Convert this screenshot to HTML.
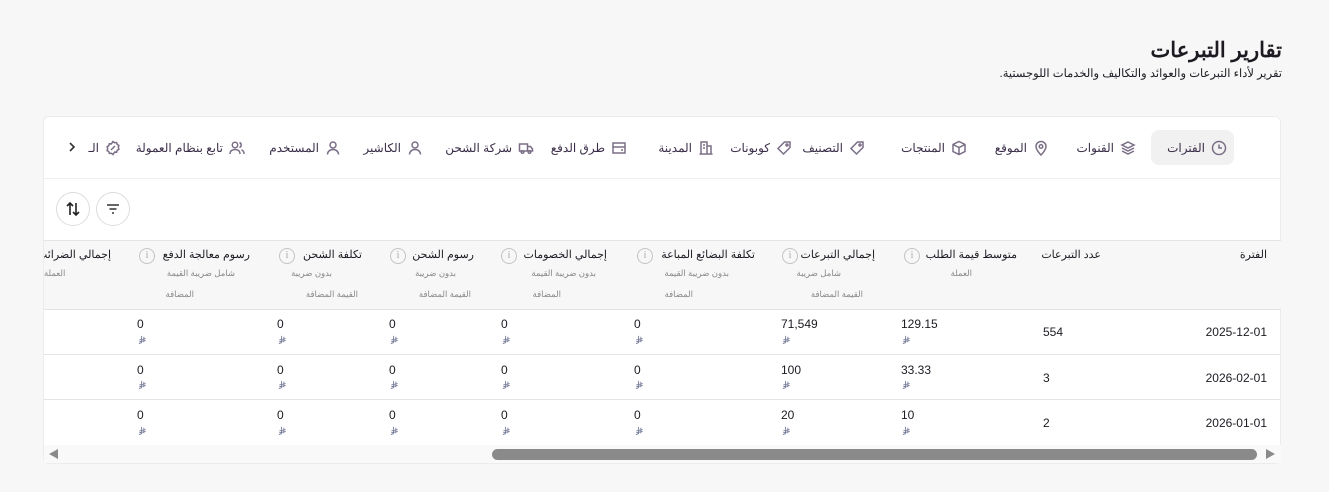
<!DOCTYPE html>
<html><head><meta charset="utf-8"><style>
*{margin:0;padding:0;box-sizing:border-box}
body{width:1329px;height:492px;background:#f7f7f7;font-family:"Liberation Sans","Noto Sans CJK SC",sans-serif;position:relative;overflow:hidden;color:#1d1a22}
.a{position:absolute;white-space:nowrap}
.card{position:absolute;left:43px;top:116px;width:1238px;height:348px;background:#fff;border:1px solid #ececec;border-radius:6px;overflow:hidden}
.tab{position:absolute;top:130px;height:35px;display:flex;align-items:center;gap:6px;font-size:12px;color:#3a2d48;direction:rtl}
.tab svg{width:16px;height:16px;stroke:#7a6e86;fill:none;stroke-width:1.5}
.hd{font-size:11px;color:#1d1a22;direction:rtl}
.sub{font-size:8.5px;color:#888;direction:rtl}
.info{position:absolute;width:16px;height:16px;border:1.3px solid #c4c4c4;border-radius:50%;color:#aaa;font-size:10px;text-align:center;line-height:13px;font-family:"Liberation Serif",serif;background:#f7f7f7}
.v{font-size:12px;color:#1d1a22}
.r{width:9px;height:9px}
.line{position:absolute;left:44px;width:1237px;height:1px;background:#e4e4e4}
</style></head><body>
<svg width="0" height="0" style="position:absolute"><defs><symbol id="rs" viewBox="0 0 10 10"><path d="M4 1v7.5L1 9.5 M6.5 2v6 M1.5 5.5l7-1.5 M1.5 7.5l7-1.5" stroke="#7a7f9a" stroke-width="1" fill="none"/></symbol></defs></svg>
<div class="a" style="right:47px;top:38px;font-size:21px;font-weight:bold;direction:rtl">تقارير التبرعات</div>
<div class="a" style="right:47px;top:66px;font-size:11.5px;direction:rtl">تقرير لأداء التبرعات والعوائد والتكاليف والخدمات اللوجستية.</div>
<div class="card"></div>
<div class="a" style="left:1151px;top:130px;width:83px;height:35px;background:#f1f1f2;border-radius:8px"></div>
<div class="tab" style="right:102px"><svg viewBox="0 0 16 16"><circle cx="8" cy="8" r="6.5"/><path d="M8 4.5V8h3"/></svg>الفترات</div>
<div class="tab" style="right:193px"><svg viewBox="0 0 16 16"><path d="M8 2 14 5 8 8 2 5Z M2 8l6 3 6-3 M2 11l6 3 6-3"/></svg>القنوات</div>
<div class="tab" style="right:280px"><svg viewBox="0 0 16 16"><path d="M8 15s5-5 5-8.5A5 5 0 0 0 3 6.5C3 10 8 15 8 15Z"/><circle cx="8" cy="6.5" r="1.8"/></svg>الموقع</div>
<div class="tab" style="right:362px"><svg viewBox="0 0 16 16"><path d="M8 1.5 14 4.5v7L8 14.5 2 11.5v-7Z M2 4.5 8 7.5 14 4.5 M8 7.5v7"/></svg>المنتجات</div>
<div class="tab" style="right:464px"><svg viewBox="0 0 16 16"><path d="M14 2H8.5L2 8.5 7.5 14 14 7.5Z"/><circle cx="11" cy="5" r="1"/></svg>التصنيف</div>
<div class="tab" style="right:537px"><svg viewBox="0 0 16 16"><path d="M14 2H8.5L2 8.5 7.5 14 14 7.5Z"/><circle cx="11" cy="5" r="1"/></svg>كوبونات</div>
<div class="tab" style="right:615px"><svg viewBox="0 0 16 16"><path d="M3 14V2h6v12 M9 6h4v8 M1.5 14h13 M5 5h2M5 8h2"/></svg>المدينة</div>
<div class="tab" style="right:702px"><svg viewBox="0 0 16 16"><rect x="2" y="3" width="12" height="10"/><path d="M2 7h12 M10 10h2"/></svg>طرق الدفع</div>
<div class="tab" style="right:795px"><svg viewBox="0 0 16 16"><path d="M1.5 4h8v7h-8Z M9.5 6.5h3l2 2.5v2h-5"/><circle cx="4.5" cy="12" r="1.3"/><circle cx="11.5" cy="12" r="1.3"/></svg>شركة الشحن</div>
<div class="tab" style="right:906px"><svg viewBox="0 0 16 16"><circle cx="8" cy="5" r="3"/><path d="M2.5 14.5c0-3 2.5-5 5.5-5s5.5 2 5.5 5"/></svg>الكاشير</div>
<div class="tab" style="right:988px"><svg viewBox="0 0 16 16"><circle cx="8" cy="5" r="3"/><path d="M2.5 14.5c0-3 2.5-5 5.5-5s5.5 2 5.5 5"/></svg>المستخدم</div>
<div class="tab" style="right:1084px"><svg viewBox="0 0 16 16"><circle cx="6" cy="5" r="2.7"/><path d="M1 14c0-3 2-4.5 5-4.5s5 1.5 5 4.5 M10.5 2.5a2.7 2.7 0 0 1 0 5 M12.5 9.8c1.5.6 2.5 2 2.5 4.2"/></svg>تابع بنظام العمولة</div>
<div class="tab" style="right:1208px"><svg viewBox="0 0 16 16"><path d="M8 1.5l1.6 1.2 2-.2.6 1.9 1.7 1.1-.6 1.9.6 1.9-1.7 1.1-.6 1.9-2-.2L8 14.5l-1.6-1.2-2 .2-.6-1.9-1.7-1.1.6-1.9-.6-1.9 1.7-1.1.6-1.9 2 .2Z M6 10l4-4"/></svg>الـ</div>
<svg class="a" style="left:67px;top:141px" width="10" height="12" viewBox="0 0 10 12"><path d="M3 2l4 4-4 4" stroke="#333" stroke-width="1.6" fill="none"/></svg>
<div class="a" style="left:44px;top:178px;width:1237px;height:1px;background:#eee"></div>
<div class="a" style="left:56px;top:192px;width:34px;height:34px;border:1px solid #ddd;border-radius:50%"><svg width="32" height="32" viewBox="0 0 32 32" style="position:absolute;left:0;top:0"><path d="M13 22V10M10 13l3-3 3 3M19 10v12M16 19l3 3 3-3" stroke="#222" stroke-width="1.6" fill="none"/></svg></div>
<div class="a" style="left:96px;top:192px;width:34px;height:34px;border:1px solid #ddd;border-radius:50%"><svg width="32" height="32" viewBox="0 0 32 32" style="position:absolute;left:0;top:0"><path d="M10 12h12M12.5 16h7M15 20h2" stroke="#333" stroke-width="1.6"/></svg></div>
<div class="a" style="left:44px;top:240px;width:1237px;height:70px;background:#f7f7f7;border-top:1px solid #e4e4e4;border-bottom:1px solid #e4e4e4"></div>
<div class="a hd" style="right:62px;top:248px">الفترة</div>
<div class="a hd" style="right:228px;top:248px">عدد التبرعات</div>
<div class="a hd" style="right:312px;top:248px">متوسط قيمة الطلب</div><div class="a sub" style="right:357px;top:268px">العملة</div><div class="info" style="left:904px;top:248px">i</div>
<div class="a hd" style="right:454px;top:248px">إجمالي التبرعات</div><div class="a sub" style="right:488px;top:268px">شامل ضريبة</div><div class="a sub" style="right:466px;top:289px">القيمة المضافة</div><div class="info" style="left:782px;top:248px">i</div>
<div class="a hd" style="right:574px;top:248px">تكلفة البضائع المباعة</div><div class="a sub" style="right:600px;top:268px">بدون ضريبة القيمة</div><div class="a sub" style="right:636px;top:289px">المضافة</div><div class="info" style="left:637px;top:248px">i</div>
<div class="a hd" style="right:722px;top:248px">إجمالي الخصومات</div><div class="a sub" style="right:733px;top:268px">بدون ضريبة القيمة</div><div class="a sub" style="right:768px;top:289px">المضافة</div><div class="info" style="left:501px;top:248px">i</div>
<div class="a hd" style="right:855px;top:248px">رسوم الشحن</div><div class="a sub" style="right:873px;top:268px">بدون ضريبة</div><div class="a sub" style="right:858px;top:289px">القيمة المضافة</div><div class="info" style="left:390px;top:248px">i</div>
<div class="a hd" style="right:967px;top:248px">تكلفة الشحن</div><div class="a sub" style="right:997px;top:268px">بدون ضريبة</div><div class="a sub" style="right:971px;top:289px">القيمة المضافة</div><div class="info" style="left:279px;top:248px">i</div>
<div class="a hd" style="right:1079px;top:248px">رسوم معالجة الدفع</div><div class="a sub" style="right:1094px;top:268px">شامل ضريبة القيمة</div><div class="a sub" style="right:1135px;top:289px">المضافة</div><div class="info" style="left:139px;top:248px">i</div>
<div class="a hd" style="left:44px;top:248px;width:67px;overflow:hidden;direction:rtl">إجمالي الضرائب</div><div class="a sub" style="left:44px;top:268px">العملة</div>
<div class="line" style="top:354px"></div><div class="line" style="top:399px"></div>

<div class="a v" style="right:62px;top:325px">2025-12-01</div><div class="a v" style="left:1043px;top:325px">554</div>
<div class="a v" style="right:62px;top:371px">2026-02-01</div><div class="a v" style="left:1043px;top:371px">3</div>
<div class="a v" style="right:62px;top:416px">2026-01-01</div><div class="a v" style="left:1043px;top:416px">2</div>

<div class="a v" style="left:901px;top:317px">129.15</div><svg class="a r" style="left:902px;top:335px"><use href="#rs"/></svg>
<div class="a v" style="left:781px;top:317px">71,549</div><svg class="a r" style="left:782px;top:335px"><use href="#rs"/></svg>
<div class="a v" style="left:901px;top:363px">33.33</div><svg class="a r" style="left:902px;top:380px"><use href="#rs"/></svg>
<div class="a v" style="left:781px;top:363px">100</div><svg class="a r" style="left:782px;top:380px"><use href="#rs"/></svg>
<div class="a v" style="left:901px;top:408px">10</div><svg class="a r" style="left:902px;top:426px"><use href="#rs"/></svg>
<div class="a v" style="left:781px;top:408px">20</div><svg class="a r" style="left:782px;top:426px"><use href="#rs"/></svg>

<div class="a v" style="left:634px;top:317px">0</div><svg class="a r" style="left:635px;top:335px"><use href="#rs"/></svg>
<div class="a v" style="left:501px;top:317px">0</div><svg class="a r" style="left:502px;top:335px"><use href="#rs"/></svg>
<div class="a v" style="left:389px;top:317px">0</div><svg class="a r" style="left:390px;top:335px"><use href="#rs"/></svg>
<div class="a v" style="left:277px;top:317px">0</div><svg class="a r" style="left:278px;top:335px"><use href="#rs"/></svg>
<div class="a v" style="left:137px;top:317px">0</div><svg class="a r" style="left:138px;top:335px"><use href="#rs"/></svg>
<div class="a v" style="left:634px;top:363px">0</div><svg class="a r" style="left:635px;top:380px"><use href="#rs"/></svg>
<div class="a v" style="left:501px;top:363px">0</div><svg class="a r" style="left:502px;top:380px"><use href="#rs"/></svg>
<div class="a v" style="left:389px;top:363px">0</div><svg class="a r" style="left:390px;top:380px"><use href="#rs"/></svg>
<div class="a v" style="left:277px;top:363px">0</div><svg class="a r" style="left:278px;top:380px"><use href="#rs"/></svg>
<div class="a v" style="left:137px;top:363px">0</div><svg class="a r" style="left:138px;top:380px"><use href="#rs"/></svg>
<div class="a v" style="left:634px;top:408px">0</div><svg class="a r" style="left:635px;top:426px"><use href="#rs"/></svg>
<div class="a v" style="left:501px;top:408px">0</div><svg class="a r" style="left:502px;top:426px"><use href="#rs"/></svg>
<div class="a v" style="left:389px;top:408px">0</div><svg class="a r" style="left:390px;top:426px"><use href="#rs"/></svg>
<div class="a v" style="left:277px;top:408px">0</div><svg class="a r" style="left:278px;top:426px"><use href="#rs"/></svg>
<div class="a v" style="left:137px;top:408px">0</div><svg class="a r" style="left:138px;top:426px"><use href="#rs"/></svg>

<div class="a" style="left:44px;top:445px;width:1237px;height:18px;background:#f9f9f9"></div>
<div class="a" style="left:492px;top:449px;width:765px;height:11px;background:#8a8a8a;border-radius:6px"></div>
<div class="a" style="left:49px;top:449px;width:0;height:0;border-top:5.5px solid transparent;border-bottom:5.5px solid transparent;border-right:9px solid #8a8a8a"></div>
<div class="a" style="left:1266px;top:449px;width:0;height:0;border-top:5.5px solid transparent;border-bottom:5.5px solid transparent;border-left:9px solid #8a8a8a"></div>
</body></html>
